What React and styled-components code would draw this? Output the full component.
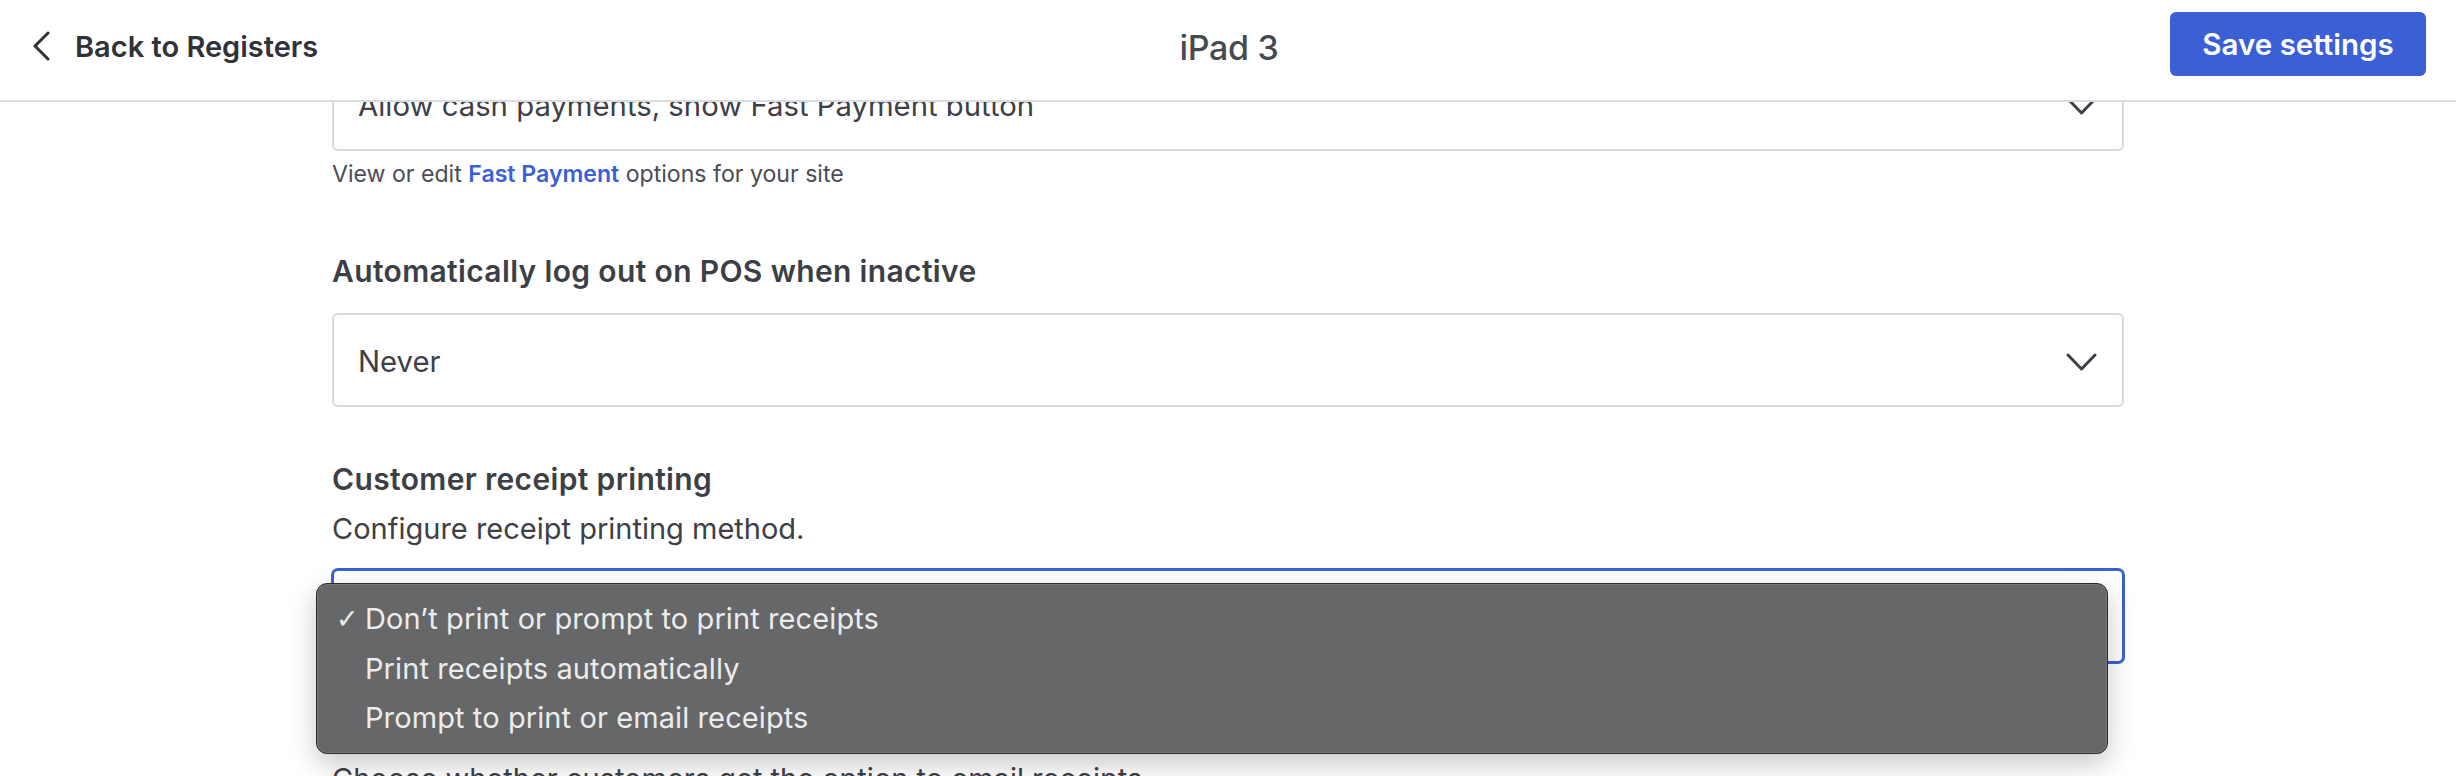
import React from "react";
import styled, { createGlobalStyle } from "styled-components";

const GlobalStyle = createGlobalStyle`
  html, body {
    margin: 0;
    padding: 0;
    background: #ffffff;
  }
  body {
    font-family: Inter, "Liberation Sans", sans-serif;
    color: #3d4047;
    overflow: hidden;
  }
  * { box-sizing: border-box; }
`;

const Page = styled.div`
  position: relative;
  width: 2456px;
  height: 776px;
  overflow: hidden;
  background: #ffffff;
`;

const Header = styled.header`
  position: absolute;
  top: 0;
  left: 0;
  right: 0;
  z-index: 10;
  height: 102px;
  display: grid;
  grid-template-columns: 1fr auto 1fr;
  align-items: start;
  padding: 12px 30px 0 32px;
  background: #ffffff;
  border-bottom: 2px solid #dadde0;
`;

const BackLink = styled.a`
  justify-self: start;
  height: 64px;
  display: flex;
  align-items: center;
  gap: 25px;
  color: #2f3238;
  font-size: 29px;
  font-weight: 600;
  letter-spacing: 0;
  text-decoration: none;
  cursor: pointer;
  padding-top: 4px;
`;

const Title = styled.h1`
  margin: 0;
  height: 64px;
  display: flex;
  align-items: center;
  padding-top: 6px;
  font-size: 34px;
  font-weight: 500;
  color: #464950;
  letter-spacing: -0.3px;
`;

const SaveButton = styled.button`
  justify-self: end;
  width: 256px;
  height: 64px;
  border: none;
  border-radius: 6px;
  background: #3b60d6;
  color: #ffffff;
  font-family: inherit;
  font-size: 29.5px;
  font-weight: 600;
  letter-spacing: 0;
  cursor: pointer;
`;

const Main = styled.main`
  padding-top: 57px;
`;

const Form = styled.div`
  width: 1792px;
  margin: 0 auto;
  display: flex;
  flex-direction: column;
  gap: 55px;
`;

const Field = styled.section`
  display: flex;
  flex-direction: column;
  margin-top: ${(p) => p.$offset || 0}px;
`;

const Label = styled.label`
  font-size: 30px;
  line-height: 34px;
  font-weight: 600;
  color: #3c3f46;
  letter-spacing: 0.35px;
  margin-bottom: 15px;
`;

const Description = styled.p`
  margin: 0 0 22px;
  font-size: 29px;
  line-height: 36px;
  color: #3d4047;
  letter-spacing: 0;
`;

const SelectWrap = styled.div`
  position: relative;
  ${Label} + & {
    margin-top: 10px;
  }
`;

const SelectBox = styled.div`
  height: 94px;
  display: flex;
  align-items: center;
  justify-content: space-between;
  padding: 4px 25px 0 24px;
  border: 2px solid ${(p) => (p.$focused ? "#3b5fd6" : "#d7dade")};
  box-shadow: ${(p) => (p.$focused ? "0 0 0 1px #3b5fd6" : "none")};
  border-radius: 6px;
  background: #ffffff;
  font-size: 29.3px;
  line-height: 36px;
  color: #3d4047;
  letter-spacing: 0;
`;

const Helper = styled.p`
  margin: 7px 0 9px;
  font-size: 23.1px;
  line-height: 32px;
  color: #4a4d55;
  letter-spacing: 0;
`;

const InlineLink = styled.a`
  color: #3a5fd8;
  font-weight: 600;
  text-decoration: none;
`;

const Menu = styled.ul`
  position: absolute;
  top: 14px;
  left: -16px;
  width: 1792px;
  height: 171px;
  margin: 0;
  padding: 10px 0 0 19px;
  list-style: none;
  background: #666768;
  border: 1px solid #2b2b2c;
  border-radius: 11px;
  box-shadow: inset 0 0 0 1px rgba(255, 255, 255, 0.12),
    0 10px 28px rgba(0, 0, 0, 0.22);
  z-index: 5;
`;

const MenuItem = styled.li`
  display: flex;
  align-items: center;
  height: 49.5px;
  font-size: 29px;
  color: #ececec;
  letter-spacing: 0.1px;
`;

const Check = styled.span`
  width: 29px;
  flex: none;
  font-family: "DejaVu Sans", sans-serif;
  font-size: 27px;
  line-height: 1;
  color: #ececec;
  visibility: ${(p) => (p.$on ? "visible" : "hidden")};
`;

const ChevronLeft = () => (
  <svg width="18" height="30" viewBox="0 0 18 30" fill="none">
    <path
      d="M16 2 L3 15 L16 28"
      stroke="#2f3238"
      strokeWidth="3"
      strokeLinecap="round"
      strokeLinejoin="round"
    />
  </svg>
);

const ChevronDown = () => (
  <svg width="31" height="19" viewBox="0 0 31 19" fill="none">
    <path
      d="M2 2 L15.5 16 L29 2"
      stroke="#3d4047"
      strokeWidth="3"
      strokeLinecap="round"
      strokeLinejoin="round"
    />
  </svg>
);

const receiptOptions = [
  "Don\u2019t print or prompt to print receipts",
  "Print receipts automatically",
  "Prompt to print or email receipts",
];

export default function App() {
  return (
    <>
      <GlobalStyle />
      <Page>
        <Header>
          <BackLink>
            <ChevronLeft />
            <span>Back to Registers</span>
          </BackLink>
          <Title>iPad 3</Title>
          <SaveButton>Save settings</SaveButton>
        </Header>
        <Main>
          <Form>
            <Field>
              <SelectWrap>
                <SelectBox>
                  <span>Allow cash payments, show Fast Payment button</span>
                  <ChevronDown />
                </SelectBox>
              </SelectWrap>
              <Helper>
                View or edit <InlineLink>Fast Payment</InlineLink> options for
                your site
              </Helper>
            </Field>
            <Field>
              <Label>Automatically log out on POS when inactive</Label>
              <SelectWrap>
                <SelectBox>
                  <span>Never</span>
                  <ChevronDown />
                </SelectBox>
              </SelectWrap>
            </Field>
            <Field>
              <Label>Customer receipt printing</Label>
              <Description>Configure receipt printing method.</Description>
              <SelectWrap>
                <SelectBox $focused>
                  <span>{receiptOptions[0]}</span>
                  <ChevronDown />
                </SelectBox>
                <Menu>
                  {receiptOptions.map((o, i) => (
                    <MenuItem key={o}>
                      <Check $on={i === 0}>✓</Check>
                      {o}
                    </MenuItem>
                  ))}
                </Menu>
              </SelectWrap>
            </Field>
            <Field $offset={43}>
              <Description>
                Choose whether customers get the option to email receipts
              </Description>
            </Field>
          </Form>
        </Main>
      </Page>
    </>
  );
}
